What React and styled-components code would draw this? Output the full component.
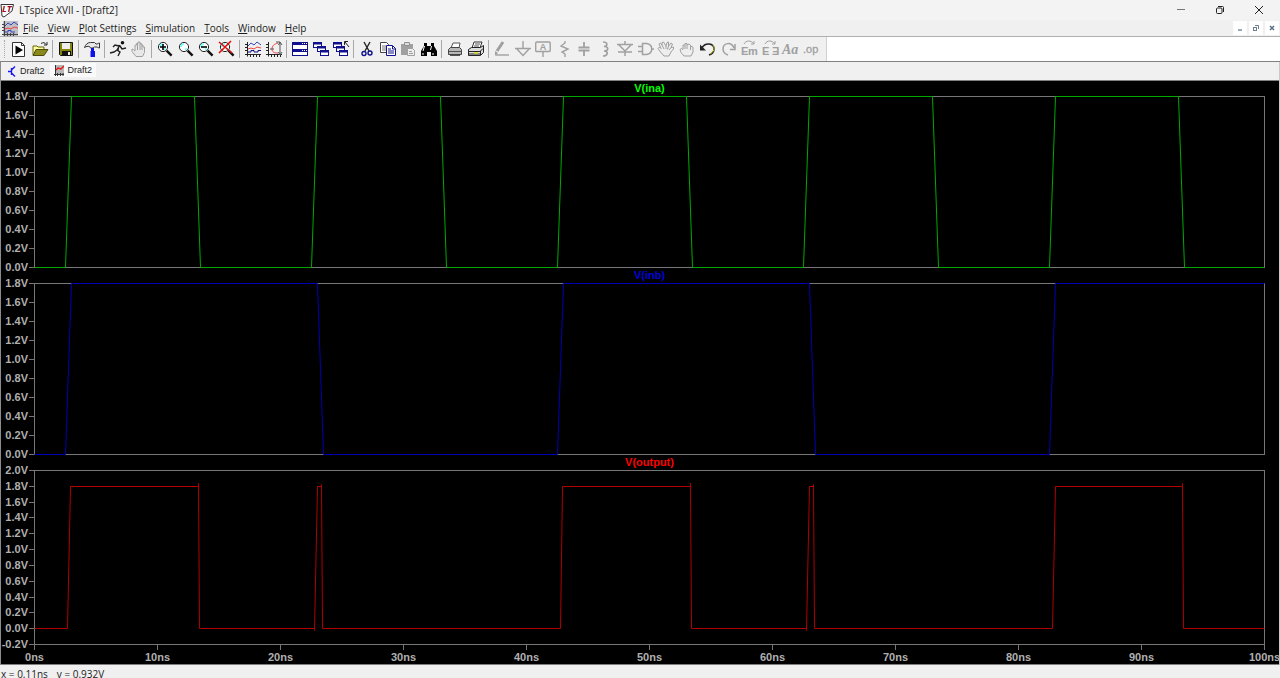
import React, {useLayoutEffect, useRef, useState} from "react";
import styled, {createGlobalStyle} from 'styled-components';

const GREY = '#a0a0a0';
const NAVY = '#10108c';

const END_TIME = 100;
const TIME_TICKS = [0, 10, 20, 30, 40, 50, 60, 70, 80, 90, 100];

const INPUT_TICKS = ['1.8V', '1.6V', '1.4V', '1.2V', '1.0V', '0.8V', '0.6V', '0.4V', '0.2V', '0.0V'];

const PANES = [
    {
        name: 'V(ina)', titleColor: '#00ff00', color: '#00a800', min: 0, max: 1.8, ticks: INPUT_TICKS,
        samples: [
            [0, 0], [2.5, 0], [3, 1.8], [13, 1.8], [13.5, 0],
            [22.5, 0], [23, 1.8], [33, 1.8], [33.5, 0],
            [42.5, 0], [43, 1.8], [53, 1.8], [53.5, 0],
            [62.5, 0], [63, 1.8], [73, 1.8], [73.5, 0],
            [82.5, 0], [83, 1.8], [93, 1.8], [93.5, 0], [100, 0],
        ],
    },
    {
        name: 'V(inb)', titleColor: '#0000dc', color: '#0000b4', min: 0, max: 1.8, ticks: INPUT_TICKS,
        samples: [
            [0, 0], [2.5, 0], [3, 1.8], [23, 1.8], [23.5, 0],
            [42.5, 0], [43, 1.8], [63, 1.8], [63.5, 0],
            [82.5, 0], [83, 1.8], [100, 1.8],
        ],
    },
    {
        name: 'V(output)', titleColor: '#ff0000', color: '#b00000', min: -0.2, max: 2,
        ticks: ['2.0V', '1.8V', '1.6V', '1.4V', '1.2V', '1.0V', '0.8V', '0.6V', '0.4V', '0.2V', '0.0V', '-0.2V'],
        samples: [
            [0, 0], [2.72, 0], [2.95, 1.8], [13.3, 1.8], [13.36, 1.83], [13.45, 0],
            [22.75, 0], [22.8, -0.02], [22.98, 1.8], [23.3, 1.8], [23.34, 1.82], [23.45, 0],
            [42.75, 0], [42.95, 1.8], [53.3, 1.8], [53.36, 1.83], [53.45, 0],
            [62.75, 0], [62.8, -0.02], [62.98, 1.8], [63.3, 1.8], [63.34, 1.82], [63.45, 0],
            [82.8, 0], [82.98, 1.8], [93.3, 1.8], [93.36, 1.83], [93.45, 0], [100, 0],
        ],
    },
];

const MENU = ['File', 'View', 'Plot Settings', 'Simulation', 'Tools', 'Window', 'Help'];

const lens = (
    <>
        <circle cx="6" cy="6" r="4.6" fill="#fff" stroke="#222"/>
        <path d="M3 6a3 3 0 0 1 3-3M8.6 7.4l-1.4 1.4" stroke="#6ff" strokeWidth="1.6" fill="none"/>
        <path d="M9.6 9.6l5 5" stroke="#111" strokeWidth="2.4"/>
    </>
);

const plotAxes = <path d="M2.5 1v14.5M0 13.5h16M0 3.5h2M0 6.5h2M0 9.5h2M5.5 13v3M8.5 13v3M11.5 13v3M14.5 13v3" stroke="#222" fill="none"/>;

const smallWindow = (x, y) => (
    <g>
        <rect x={x + 0.5} y={y + 0.5} width="8" height="5" fill="#fff" stroke={NAVY}/>
        <path d={`M${x} ${y + 1.5}h9`} stroke={NAVY} strokeWidth="2"/>
    </g>
);

const ICONS = {
    run: <>
        <path d="M1.5 1.5h9l3 3v11h-12z" fill="#fff" stroke="#333"/>
        <path d="M10.5 1.5v3h3" fill="none" stroke="#333"/>
        <path d="M4.5 4.5l7.500 4.500-7.500 4.500z" fill="#000"/>
    </>,
    open: <>
        <path d="M1 14V5h4l1 1h6v3" fill="#ffff9c" stroke="#66660a"/>
        <path d="M1 14.5l3-6h12l-4 6z" fill="#8a8a1c" stroke="#4c4c08"/>
        <path d="M9 2.5c2-1.4 4-1 5 1M15 1v3h-3" fill="none" stroke="#222"/>
    </>,
    save: <>
        <path d="M1.5 1.5h13v13h-12l-1-1z" fill="#85850c" stroke="#111"/>
        <path d="M4 2h8v6H4z" fill="#eee"/>
        <path d="M4 10h9v4H4z" fill="#111"/>
        <path d="M10 11h2v3h-2z" fill="#eee"/>
    </>,
    hammer: <>
        <path d="M0.500 6.500c1-3 3-5 6-5h4l1.500 1.500h1.500l1-1h1v5h-1l-1-1h-3L9 7H6.500L5.500 5.500c-2-.5-3 0-5 1z" fill="#e8e8e8" stroke="#333"/>
        <path d="M7 7h3v3h1v6H6.500v-6H7z" fill="#1010e8"/>
    </>,
    runner: <>
        <circle cx="12.500" cy="1.800" r="1.800" fill="#111"/>
        <path d="M10 4L7 9l3 2-2 4M7 9l-3 2-4 1M9 5L5 4 3 6M10 5l2 3 4-1M9 4l-1 5" fill="none" stroke="#222" strokeWidth="1.4"/>
    </>,
    hand: <>
        <path d="M5 15.500L1 10.500V8l1.500.5L4 10V4h1.500V2.500H7V1h2v1.500h1.500V4H12v2h1.500v5.500l-2 4z" fill="#e8e8e8" stroke={GREY}/>
        <path d="M6.500 3v6M9 2v7M11 4v5" stroke={GREY}/>
    </>,
    zoomIn: <>{lens}<path d="M3 6h6M6 3v6" stroke="#000" strokeWidth="1.6"/></>,
    zoomArea: lens,
    zoomOut: <>{lens}<path d="M3 6h6" stroke="#000" strokeWidth="1.6"/></>,
    zoomFit: <>{lens}<path d="M0 1l13 11M12 0L0 12" stroke="#e01010" strokeWidth="1.6"/></>,
    traces: <>
        {plotAxes}
        <path d="M3 5l3-3 3 2 3-3 4 3" fill="none" stroke="#3344c0"/>
        <path d="M3 8l3-1 3 1 3-2 4 1" fill="none" stroke="#f04040"/>
        <path d="M3 11h3V9.500h3V11h4V9.500h3" fill="none" stroke="#101080"/>
    </>,
    autorange: <>
        {plotAxes}
        <path d="M12 2C8 3 6 5 6 8s2 4 6 4" fill="none" stroke="#f04040"/>
        <path d="M4 8h4M10 1h4v13M12.500 4l1.500-3 2 3M12.500 11l1.500 3 2-3" fill="none" stroke="#555"/>
    </>,
    tile: <>
        <rect x="0.5" y="1.500" width="15" height="13" fill="#fff" stroke={NAVY}/>
        <path d="M0 2.500h16M0 9.500h16" stroke={NAVY} strokeWidth="3"/>
        <path d="M10 2.500h5M10 9.500h5" stroke="#fff" strokeDasharray="1 1"/>
    </>,
    cascade: <>{smallWindow(0, 1)}{smallWindow(4, 5)}{smallWindow(7, 9)}</>,
    closeAll: <>
        {smallWindow(0, 1)}{smallWindow(3, 5)}{smallWindow(6, 9)}
        <path d="M16 6l-4-5M11.500 4V0.500H15" stroke="#222" fill="none"/>
    </>,
    cut: <>
        <path d="M5 1l5 9M11 1L6 10" stroke="#222" strokeWidth="1.4"/>
        <circle cx="5" cy="12.500" r="2" fill="none" stroke={NAVY} strokeWidth="1.4"/>
        <circle cx="11" cy="12" r="2" fill="none" stroke={NAVY} strokeWidth="1.4"/>
    </>,
    copy: <>
        <path d="M0.500 1.500h6l2 2v8h-8z" fill="#fff" stroke="#444"/>
        <path d="M2 5h4M2 7h4M2 9h4" stroke="#777"/>
        <path d="M6.500 4.500h6l3 3v7h-9z" fill="#fff" stroke={NAVY}/>
        <path d="M12.500 5v3h3M8 8h3M8 10h6M8 12h6" stroke={NAVY} fill="none"/>
    </>,
    paste: <>
        <path d="M1 3h12v11H1z" fill={GREY}/>
        <path d="M4.500 1.500h5v3h-5z" fill="#ddd" stroke="#909090"/>
        <path d="M7.500 7.500h5l2 2v5h-7z" fill="#eee" stroke={GREY}/>
        <path d="M9 10.500h3M9 12.500h4" stroke={GREY}/>
    </>,
    find: <>
        <path d="M3 2h3v3h4V2h3v3l3 5v5h-6v-4H6v4H0v-5l3-5z" fill="#000"/>
        <path d="M3.500 5L2 10M10.500 5L9.500 9M2 12v2M12 12v2" stroke="#fff"/>
    </>,
    print: <>
        <path d="M4 7l2-5h7l-1 5" fill="#fff" stroke="#555"/>
        <path d="M1.500 8.500l2-2h9l2 2v5h-13z" fill="#b8b8b8" stroke="#444"/>
        <path d="M2 10.500h12M3 14.500h10" stroke="#555"/>
    </>,
    printSetup: <>
        <path d="M4 7l2-6h8l-2 6" fill="#fff" stroke="#333"/>
        <path d="M7 3h5M6 5h5" stroke="#555"/>
        <path d="M0.500 8.500l3-2h9l3-2v7l-3 3h-12z" fill="#ddd" stroke="#222"/>
        <path d="M0 10.500h12l3-3M1 13h11M12.500 10v4" stroke="#222" fill="none"/>
        <path d="M6 12h4" stroke="#d8d820" strokeWidth="1.500"/>
    </>,
    wire: <>
        <path d="M9 1L3 10" stroke={GREY} strokeWidth="3"/>
        <path d="M1 10l3 2-3 3z" fill={GREY}/>
        <path d="M2 14h13" stroke={GREY} strokeWidth="1.400"/>
    </>,
    ground: <path d="M8 0v7M0 7.500h16M2 8l6 6.500L14 8" fill="none" stroke={GREY} strokeWidth="1.400"/>,
    label: <>
        <rect x="0.700" y="1" width="14.500" height="9.500" rx="1" fill="none" stroke={GREY} strokeWidth="1.400"/>
        <path d="M8 10v6" stroke={GREY} strokeWidth="1.400"/>
        <text x="8" y="9" textAnchor="middle" fontSize="9" fontWeight="700" fill={GREY}>A</text>
    </>,
    resistor: <path d="M9 0v2L5 5l7 3-6 3 3 2v3" fill="none" stroke={GREY} strokeWidth="1.400"/>,
    capacitor: <path d="M8 1v5M8 10v5M2.500 6.500h11M2.500 9.500h11" stroke={GREY} strokeWidth="1.800"/>,
    inductor: <path d="M6 1c5 0 5 4 1 4.500 5 0 5 4.500 0 4.500 5 0 4 5-1 5" fill="none" stroke={GREY} strokeWidth="1.600"/>,
    diode: <path d="M8 0v3M8 11v4M0 3.500h16M2 4l6 6 6-6M1 11h14" fill="none" stroke={GREY} strokeWidth="1.500"/>,
    component: <path d="M4.500 2.500h4c7 1 7 10 0 11h-4zM0 5.500h4M0 10.500h4M13 8h3" fill="none" stroke={GREY} strokeWidth="1.500"/>,
    move: <>
        <path d="M6 15L2.500 11 0 7.500 1.500 6 3 7.500 1 3l1.500-1L4 4V1.500L5.500 1 8 5l1-3.500L10.500 1v4L13 2l1.500 1L13 6.500l2.500-.5v2L13 11l-2 4z" fill="#eee" stroke={GREY}/>
        <path d="M4 4l2 4M8 5v3M10.500 5L9.500 8.500M13 6.500L11 9" stroke={GREY}/>
    </>,
    drag: <>
        <path d="M5 15L2 11.500 1 8.500 2.500 7.500 4 8.500V4h2V2.500h2V4l2-1 1.500 1v1.500h2l.5 1.500v4l-2 4z" fill="#eee" stroke={GREY}/>
        <path d="M6 4v4M8 4v4M11.500 5.500V9" stroke={GREY}/>
    </>,
    undo: <>
        <path d="M3 7c3-6 12-5 12 1 0 3-2 5-5 6" fill="none" stroke="#222" strokeWidth="1.600"/>
        <path d="M14 4c2 3 1 7-3 9" fill="none" stroke="#b4b41c"/>
        <path d="M1 3.500v6h6z" fill="#222"/>
    </>,
    redo: <path d="M14 7C11 0 3 2 3 8c0 3 2 5 5 6M15 3v5.500h-5" fill="none" stroke={GREY} strokeWidth="1.500"/>,
    rotate: <>
        <path d="M4 3c2-4 7-4 10 0M14 0v3h-3" fill="none" stroke={GREY}/>
        <text x="1" y="14" fontSize="11" fontWeight="700" fill={GREY}>E</text>
        <text x="8" y="14" fontSize="11" fontWeight="700" fill={GREY}>m</text>
    </>,
    mirror: <>
        <path d="M4 3c2-4 7-4 10 0M14 0v3h-3" fill="none" stroke={GREY}/>
        <text x="1" y="14" fontSize="11" fontWeight="700" fill={GREY}>E</text>
        <text x="11" y="14" fontSize="11" fontWeight="700" fill={GREY}>Ǝ</text>
    </>,
    text: <text x="1" y="13" fontSize="14" fontWeight="700" fontStyle="italic" fontFamily="Liberation Serif, serif" fill={GREY}>Aa</text>,
    directive: <text x="1" y="12" fontSize="11" stroke={GREY} strokeWidth="0.300" fill={GREY}>.op</text>,
};

const TOOL_GROUPS = [
    ['run', 'open'],
    ['save'],
    ['hammer'],
    ['runner', 'hand'],
    ['zoomIn', 'zoomArea', 'zoomOut', 'zoomFit'],
    ['traces', 'autorange'],
    ['tile', 'cascade', 'closeAll'],
    ['cut', 'copy', 'paste', 'find'],
    ['print', 'printSetup'],
    ['wire', 'ground', 'label', 'resistor', 'capacitor', 'inductor', 'diode', 'component',
        'move', 'drag', 'undo', 'redo', 'rotate', 'mirror', 'text', 'directive'],
];

const Waveform = ({pane}) => {
    const ref = useRef(null);
    const [size, setSize] = useState({width: 0, height: 0});

    useLayoutEffect(() => {
        const measure = () => {
            const box = ref.current.getBoundingClientRect();
            setSize({width: Math.round(box.width), height: Math.round(box.height)});
        };
        measure();
        const observer = new ResizeObserver(measure);
        observer.observe(ref.current);
        return () => observer.disconnect();
    }, []);

    // keep every vertex in the middle of a pixel so the lines stay sharp
    const right = Math.max(size.width - 1, 0);
    const bottom = Math.max(size.height - 1, 0);
    const points = pane.samples.map(([time, volts]) => {
        const x = Math.round(time / END_TIME * right) + 0.5;
        const y = Math.round((pane.max - volts) / (pane.max - pane.min) * bottom) + 0.5;
        return `${x},${y}`;
    }).join(' ');

    return (
        <Frame ref={ref}>
            <svg width={size.width} height={size.height} fill="none">
                <rect x="0.5" y="0.5" width={right} height={bottom} stroke="#767676"/>
                <polyline points={points} stroke={pane.color}/>
            </svg>
        </Frame>
    )
}

const App = () => {
    return (
        <Window>
            <GlobalStyle/>
            <TitleBar>
                <svg width="15" height="15" viewBox="0 0 15 15">
                    <path d="M1 1.500h12.500L12 8l-8 6-2-1z" fill="#fff" stroke="#333"/>
                    <text x="2" y="9" fontSize="9" fontWeight="700" fontStyle="italic" fill="#a00c1c">LT</text>
                </svg>
                <Caption>LTspice XVII - [Draft2]</Caption>
                <CaptionButton aria-label="Minimize">
                    <svg width="10" height="10"><path d="M1 4.500h8" stroke="#777"/></svg>
                </CaptionButton>
                <CaptionButton aria-label="Restore">
                    <svg width="10" height="10" fill="none" stroke="#222">
                        <rect x="1.500" y="3" width="5.500" height="5.500" rx="1"/>
                        <path d="M3 1.500h4.500a1 1 0 0 1 1 1V7"/>
                    </svg>
                </CaptionButton>
                <CaptionButton aria-label="Close">
                    <svg width="10" height="10"><path d="M1 1l8 8M9 1L1 9" stroke="#222"/></svg>
                </CaptionButton>
            </TitleBar>
            <MenuBar>
                <svg width="16" height="15" viewBox="0 0 16 15">
                    <path d="M1 0h15v15H1z" fill="#c0c0c4"/>
                    <path d="M2.500 0v15M0 13.500h16M0 3.500h2M0 6.500h2M0 9.500h2M5.500 12v3M8.500 12v3M11.500 12v3" stroke="#444"/>
                    <path d="M3 5l3-3 3 2 3-3 4 3M3 11h3V9.500h3V11h4" fill="none" stroke="#3344c0"/>
                    <path d="M3 8l3-1 3 1 3-2 4 1" fill="none" stroke="#f04040"/>
                </svg>
                <MenuItems>
                    {MENU.map(item => <MenuItem key={item}><u>{item[0]}</u>{item.slice(1)}</MenuItem>)}
                </MenuItems>
                <ChildButton aria-label="Minimize plot">
                    <svg width="8" height="8"><path d="M2 6h4" stroke="#7c8ca0" strokeWidth="1.500"/></svg>
                </ChildButton>
                <ChildButton aria-label="Restore plot">
                    <svg width="8" height="8" fill="none" stroke="#6c7c94">
                        <rect x="1.500" y="3.500" width="3" height="3"/>
                        <path d="M3 1.500h3.500V5"/>
                    </svg>
                </ChildButton>
                <ChildButton aria-label="Close plot">
                    <svg width="8" height="8"><path d="M2 2l4 4M6 2L2 6" stroke="#5c6c84" strokeWidth="1.500"/></svg>
                </ChildButton>
            </MenuBar>
            <ToolbarDock>
                <Toolbar>
                    <Gripper/>
                    {TOOL_GROUPS.map(group => (
                        <ToolGroup key={group[0]}>
                            {group.map(name => (
                                <ToolButton key={name} aria-label={name}>
                                    <svg width="16" height="16" viewBox="0 0 16 16">{ICONS[name]}</svg>
                                </ToolButton>
                            ))}
                        </ToolGroup>
                    ))}
                </Toolbar>
            </ToolbarDock>
            <Workspace>
                <Tabs role="tablist">
                    <Tab role="tab" aria-selected="false">
                        <svg width="10" height="11" fill="none" stroke="#1818f0" strokeWidth="1.400">
                            <path d="M1 5.500h3M4.500 2v7M4.500 4L8 0.500M4.500 7L8 10.500"/>
                        </svg>
                        Draft2
                    </Tab>
                    <Tab role="tab" aria-selected="true" $active>
                        <svg width="10" height="11" fill="none">
                            <path d="M1 0h9v10H1z" fill="#b8b8b8"/>
                            <path d="M1.500 0v11M0 9.500h10M3.500 8v3M6.500 8v3M9 8v3" stroke="#333"/>
                            <path d="M2 5l2-2 3 1 3-3" stroke="#e81818" strokeWidth="1.500"/>
                        </svg>
                        Draft2
                    </Tab>
                </Tabs>
                <Plot>
                    {PANES.map(pane => (
                        <Pane key={pane.name}>
                            <PaneTitle $color={pane.titleColor}>{pane.name}</PaneTitle>
                            <VoltAxis>
                                {pane.ticks.map(tick => <VoltTick key={tick}>{tick}</VoltTick>)}
                            </VoltAxis>
                            <Waveform pane={pane}/>
                        </Pane>
                    ))}
                    <TimeAxis>
                        {TIME_TICKS.map(time => <TimeTick key={time}>{time}ns</TimeTick>)}
                    </TimeAxis>
                </Plot>
            </Workspace>
            <StatusBar>
                <span>x = 0.11ns</span>
                <span>y = 0.932V</span>
            </StatusBar>
        </Window>
    )
}

const GlobalStyle = createGlobalStyle`
  body {
    margin: 0;
    overflow: hidden;
  }

  * {
    box-sizing: border-box;
  }

  button {
    margin: 0;
    padding: 0;
    border: 0;
    background: none;
    color: inherit;
    font: inherit;
  }

  svg {
    display: block;
    flex: none;
  }
`;

const Window = styled.div`
  display: flex;
  flex-direction: column;
  height: 100vh;
  background: #f0f0f0;
  color: #1c1c1c;
  font-family: "Open Sans", "Noto Sans", sans-serif;
  font-size: 10px;
`;

const TitleBar = styled.header`
  display: flex;
  align-items: center;
  height: 20px;
  padding-right: 2px;
  background: #f3f3f3;
`;

const Caption = styled.div`
  flex: 1;
  padding-left: 4px;
`;

const CaptionButton = styled.button`
  display: flex;
  align-items: center;
  justify-content: center;
  width: 39px;
  height: 18px;
`;

const MenuBar = styled.nav`
  display: flex;
  align-items: center;
  gap: 2px;
  height: 16px;
  padding: 0 1px 0 2px;
`;

const MenuItems = styled.div`
  display: flex;
  flex: 1;
  gap: 9px;
  padding-left: 3px;
`;

const MenuItem = styled.button`
  line-height: 14px;

  u {
    text-underline-offset: 1px;
  }
`;

const ChildButton = styled.button`
  display: flex;
  align-items: center;
  justify-content: center;
  width: 14px;
  height: 14px;
  background: #fff;
`;

const ToolbarDock = styled.div`
  display: flex;
  height: 26px;
  border-top: 1px solid #b0b0b0;
  border-bottom: 1px solid #808080;
  background: #fff;
`;

const Toolbar = styled.div`
  display: flex;
  align-items: center;
  padding-right: 6px;
  border-right: 1px solid #d0d0d0;
  background: #f0f0f0;
  font-family: "Liberation Sans", Arial, sans-serif;
`;

const Gripper = styled.div`
  width: 2px;
  height: 18px;
  margin: 0 3px 0 4px;
  border-left: 1px dotted #a8a8a8;
`;

const ToolGroup = styled.div`
  display: flex;
  align-items: center;

  & + &::before {
    content: "";
    width: 1px;
    height: 18px;
    margin: 0 3px 0 2px;
    background: #a8a8a8;
  }
`;

const ToolButton = styled.button`
  display: flex;
  align-items: center;
  justify-content: center;
  width: 20px;
  height: 22px;

  &:nth-child(even) {
    margin-left: 1px;
  }

  svg {
    overflow: visible;
  }
`;

const Workspace = styled.main`
  display: flex;
  flex: 1;
  flex-direction: column;
  min-height: 0;
  border-left: 1px solid #8c8c8c;
  border-right: 1px solid #c8c8c8;
`;

const Tabs = styled.div`
  display: flex;
  flex: none;
  gap: 1px;
  height: 18px;
  padding: 1px 0 0 2px;
`;

const Tab = styled.button`
  display: flex;
  align-items: center;
  gap: ${props => (props.$active ? '4px' : '3px')};
  height: ${props => (props.$active ? '14px' : '16px')};
  padding: 0 4px;
  background: ${props => (props.$active ? '#fafafa' : 'transparent')};
  font-family: "Liberation Sans", Arial, sans-serif;
  font-size: 9px;
`;

const Plot = styled.section`
  display: grid;
  flex: 1;
  grid-template-rows: minmax(187px, 1fr) minmax(187px, 1fr) minmax(190px, 1fr) 19px;
  min-height: 0;
  border-top: 1px solid #808080;
  border-bottom: 1px solid #808080;
  background: #000;
  color: #b0b0b0;
  font-family: "Liberation Sans", Arial, sans-serif;
  font-size: 11px;
  font-weight: 700;
`;

const Pane = styled.div`
  display: grid;
  grid-template-columns: 33px 1fr;
  grid-template-rows: 15px 1fr;
  min-height: 0;
  padding-right: 14px;
`;

const PaneTitle = styled.div`
  grid-column: 2;
  color: ${props => props.$color};
  line-height: 14px;
  text-align: center;
`;

const VoltAxis = styled.div`
  display: flex;
  flex-direction: column;
  justify-content: space-between;
  min-height: 0;
`;

const VoltTick = styled.div`
  display: flex;
  align-items: center;
  justify-content: flex-end;
  gap: 1px;
  height: 1px;
  line-height: 13px;
  white-space: nowrap;

  &::after {
    content: "";
    width: 5px;
    height: 1px;
    background: #767676;
  }
`;

const Frame = styled.div`
  min-width: 0;
  min-height: 0;
  overflow: hidden;
`;

const TimeAxis = styled.div`
  display: flex;
  justify-content: space-between;
  padding: 0 14px 0 33px;
`;

const TimeTick = styled.div`
  display: flex;
  flex-direction: column;
  align-items: center;
  width: 1px;
  line-height: 14px;

  &::before {
    content: "";
    flex: none;
    width: 1px;
    height: 5px;
    background: #767676;
  }
`;

const StatusBar = styled.footer`
  display: flex;
  gap: 9px;
  height: 13px;
  padding: 2px 0 0 1px;
  line-height: 14px;
`;

export default App;
